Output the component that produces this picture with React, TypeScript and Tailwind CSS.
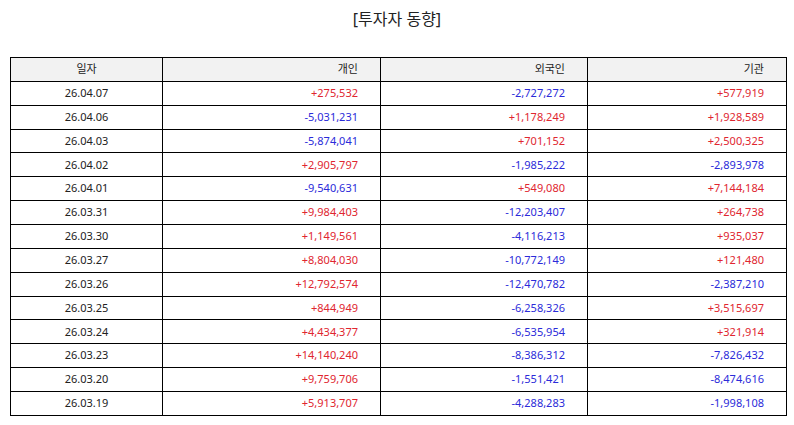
import React from "react";

const rows: [string, string, string, string][] = [
  ["26.04.07", "+275,532", "-2,727,272", "+577,919"],
  ["26.04.06", "-5,031,231", "+1,178,249", "+1,928,589"],
  ["26.04.03", "-5,874,041", "+701,152", "+2,500,325"],
  ["26.04.02", "+2,905,797", "-1,985,222", "-2,893,978"],
  ["26.04.01", "-9,540,631", "+549,080", "+7,144,184"],
  ["26.03.31", "+9,984,403", "-12,203,407", "+264,738"],
  ["26.03.30", "+1,149,561", "-4,116,213", "+935,037"],
  ["26.03.27", "+8,804,030", "-10,772,149", "+121,480"],
  ["26.03.26", "+12,792,574", "-12,470,782", "-2,387,210"],
  ["26.03.25", "+844,949", "-6,258,326", "+3,515,697"],
  ["26.03.24", "+4,434,377", "-6,535,954", "+321,914"],
  ["26.03.23", "+14,140,240", "-8,386,312", "-7,826,432"],
  ["26.03.20", "+9,759,706", "-1,551,421", "-8,474,616"],
  ["26.03.19", "+5,913,707", "-4,288,283", "-1,998,108"],
];

function Num({ v }: { v: string }) {
  const neg = v.startsWith("-");
  return (
    <td
      className={`border border-black text-right pr-[22px] ${
        neg ? "text-[#2b2bd9]" : "text-[#e0262f]"
      }`}
    >
      {v}
    </td>
  );
}

export default function App() {
  return (
    <div
      className="w-[794px] h-[425px] bg-white overflow-hidden"
      style={{ fontFamily: '"Noto Sans", "Noto Sans CJK KR", sans-serif' }}
    >
      <div className="h-[37px] flex items-center justify-center text-[16px] text-[#222]">
        [투자자 동향]
      </div>
      <div className="pt-[20px] pl-[10px]">
        <table className="border-collapse w-[776px] table-fixed text-[11px] text-[#222]">
          <colgroup>
            <col className="w-[152px]" />
            <col className="w-[218px]" />
            <col className="w-[207px]" />
            <col className="w-[199px]" />
          </colgroup>
          <thead>
            <tr className="h-[23.87px] bg-[#f2f2f2]">
              <th className="border border-black font-normal text-center">일자</th>
              <th className="border border-black font-normal text-right pr-[22px]">개인</th>
              <th className="border border-black font-normal text-right pr-[22px]">외국인</th>
              <th className="border border-black font-normal text-right pr-[22px]">기관</th>
            </tr>
          </thead>
          <tbody>
            {rows.map((r) => (
              <tr key={r[0]} className="h-[23.87px]">
                <td className="border border-black text-center">{r[0]}</td>
                <Num v={r[1]} />
                <Num v={r[2]} />
                <Num v={r[3]} />
              </tr>
            ))}
          </tbody>
        </table>
      </div>
    </div>
  );
}
